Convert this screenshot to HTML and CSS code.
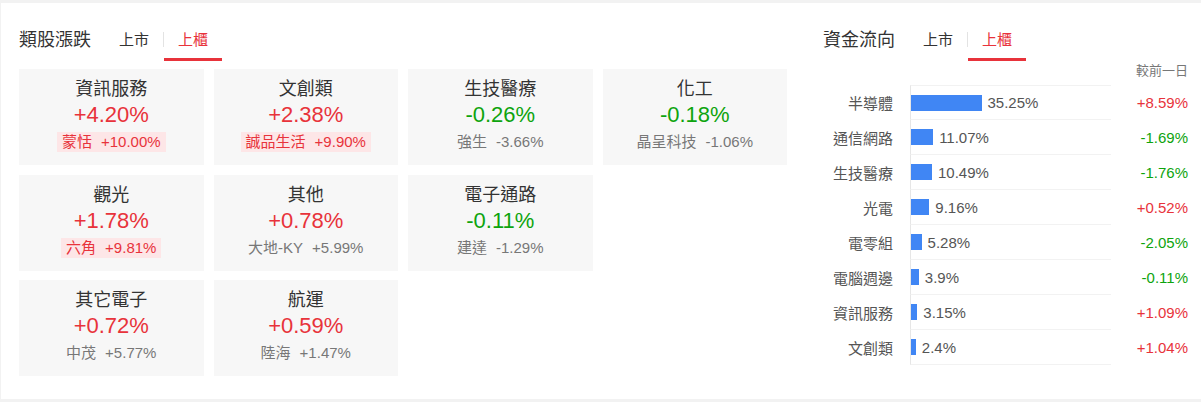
FILE: index.html
```html
<!DOCTYPE html>
<html lang="zh-Hant">

<head>
    <meta charset="UTF-8" />
    <meta name="viewport" content="width=device-width, initial-scale=1.0" />
    <title>類股漲跌 / 資金流向</title>
    <link rel="stylesheet" href="styles.css">
</head>

<body>
    <section class="card">
        <!-- 類股漲跌 -->
        <div class="sector">
            <div class="head">
                <h2 class="title">類股漲跌</h2>
                <span class="tab">上市</span>
                <span class="sep"></span>
                <span class="tab act">上櫃</span>
            </div>
            <div class="tiles">
                <div class="tile">
                    <div class="name">資訊服務</div>
                    <div class="pct up">+4.20%</div>
                    <div class="sub hot"><span>蒙恬</span><span class="v">+10.00%</span></div>
                </div>
                <div class="tile">
                    <div class="name">文創類</div>
                    <div class="pct up">+2.38%</div>
                    <div class="sub hot"><span>誠品生活</span><span class="v">+9.90%</span></div>
                </div>
                <div class="tile">
                    <div class="name">生技醫療</div>
                    <div class="pct down">-0.26%</div>
                    <div class="sub"><span>強生</span><span class="v">-3.66%</span></div>
                </div>
                <div class="tile">
                    <div class="name">化工</div>
                    <div class="pct down">-0.18%</div>
                    <div class="sub"><span>晶呈科技</span><span class="v">-1.06%</span></div>
                </div>
                <div class="tile">
                    <div class="name">觀光</div>
                    <div class="pct up">+1.78%</div>
                    <div class="sub hot"><span>六角</span><span class="v">+9.81%</span></div>
                </div>
                <div class="tile">
                    <div class="name">其他</div>
                    <div class="pct up">+0.78%</div>
                    <div class="sub"><span>大地-KY</span><span class="v">+5.99%</span></div>
                </div>
                <div class="tile">
                    <div class="name">電子通路</div>
                    <div class="pct down">-0.11%</div>
                    <div class="sub"><span>建達</span><span class="v">-1.29%</span></div>
                </div>
                <div class="tile empty"></div>
                <div class="tile">
                    <div class="name">其它電子</div>
                    <div class="pct up">+0.72%</div>
                    <div class="sub"><span>中茂</span><span class="v">+5.77%</span></div>
                </div>
                <div class="tile">
                    <div class="name">航運</div>
                    <div class="pct up">+0.59%</div>
                    <div class="sub"><span>陸海</span><span class="v">+1.47%</span></div>
                </div>
            </div>
        </div>

        <!-- 資金流向 -->
        <div class="flow">
            <div class="head">
                <h2 class="title">資金流向</h2>
                <span class="tab">上市</span>
                <span class="sep"></span>
                <span class="tab act">上櫃</span>
            </div>
            <div class="note">較前一日</div>
            <div class="chart" id="chart"></div>
        </div>
    </section>

    <script>
        // 資金流向資料
        const data = [
            ['半導體', 35.25, '+8.59%'],
            ['通信網路', 11.07, '-1.69%'],
            ['生技醫療', 10.49, '-1.76%'],
            ['光電', 9.16, '+0.52%'],
            ['電零組', 5.28, '-2.05%'],
            ['電腦週邊', 3.9, '-0.11%'],
            ['資訊服務', 3.15, '+1.09%'],
            ['文創類', 2.4, '+1.04%'],
        ];

        const chart = document.querySelector('#chart');

        data.forEach(([name, share, diff]) => {
            const row = document.createElement('div');
            row.className = 'row';
            const cls = diff[0] === '+' ? 'up' : 'down';
            // 長條寬度：100% = 200px
            row.innerHTML =
                `<span class="label">${name}</span>` +
                `<span class="plot"><i class="bar" style="width:${share * 2}px"></i><b>${share}%</b></span>` +
                `<span class="diff ${cls}">${diff}</span>`;
            chart.appendChild(row);
        });
    </script>
</body>

</html>
```

FILE: styles.css
```css
body {
    margin: 0;
    padding: 0;
    background-color: #f2f2f2;
    font-family: "Liberation Sans", "Noto Sans CJK TC", sans-serif;
    color: #333;
}

.card {
    display: flex;
    margin: 3px 0 0 1px;
    padding: 0 13px 0 18px;
    height: 396px;
    background-color: #fff;
}

/* 標題 + 頁籤 */
.head {
    display: flex;
    align-items: flex-start;
    padding-top: 26px;
}

.title {
    margin: 0 14px 0 0;
    font-size: 18px;
    font-weight: normal;
    line-height: 22px;
    color: #333;
}

.tab {
    padding: 0 14px 7px;
    font-size: 15px;
    line-height: 22px;
    color: #333;
    border-bottom: 3px solid transparent;
    cursor: pointer;
}

.tab.act {
    color: #e8333b;
    border-bottom-color: #e8333b;
}

.sep {
    width: 1px;
    height: 15px;
    margin-top: 3px;
    background-color: #e3e3e3;
}

/* 類股漲跌 */
.sector {
    width: 768px;
}

.tiles {
    display: grid;
    grid-template-columns: repeat(4, 1fr);
    grid-auto-rows: 96px;
    gap: 9.5px 10px;
    margin-top: 8px;
}

.tile {
    padding-top: 8px;
    text-align: center;
    background-color: #f7f7f7;
}

.tile.empty {
    background: none;
}

.name {
    font-size: 18px;
    line-height: 24px;
    color: #333;
}

.pct {
    font-size: 22px;
    line-height: 28px;
}

.sub {
    display: inline-block;
    margin-top: 3px;
    padding: 0 5px;
    font-size: 15px;
    line-height: 20px;
    color: #777;
}

.sub .v {
    margin-left: 9px;
}

.sub.hot {
    color: #e8333b;
    background-color: #fde6e7;
}

.up {
    color: #e8333b;
}

.down {
    color: #0ea40e;
}

/* 資金流向 */
.flow {
    width: 365px;
    margin-left: auto;
}

.note {
    margin-bottom: 4px;
    font-size: 13px;
    line-height: 20px;
    text-align: right;
    color: #777;
}

.row {
    display: grid;
    grid-template-columns: 87px 201px 1fr;
    height: 35px;
    font-size: 15px;
    color: #555;
}

.label {
    align-self: center;
    padding-right: 17px;
    text-align: right;
}

.plot {
    display: flex;
    align-items: center;
    border-left: 1px solid #e6e6e6;
    border-bottom: 1px solid #f2f2f2;
}

.row:first-child .plot {
    border-top: 1px solid #f2f2f2;
}

.bar {
    height: 16px;
    background-color: #4086f4;
}

.plot b {
    margin-left: 6px;
    font-weight: normal;
    color: #555;
}

.diff {
    align-self: center;
    text-align: right;
}
```
